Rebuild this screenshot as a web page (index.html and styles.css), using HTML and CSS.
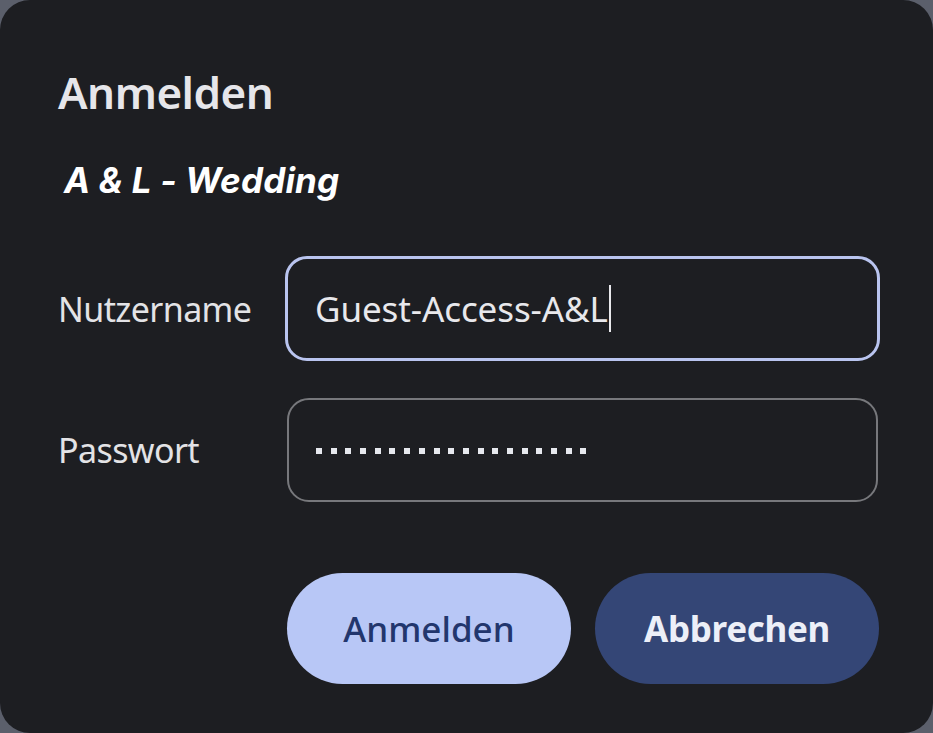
FILE: index.html
```html
<!DOCTYPE html>
<html lang="de">
<head>
<meta charset="utf-8">
<title>Anmelden</title>
<link rel="stylesheet" href="styles.css">
</head>
<body>
<div class="dialog">
  <h1 class="title">Anmelden</h1>
  <p class="subtitle">A &amp; L - Wedding</p>
  <div class="form">
    <label class="label">Nutzername</label>
    <div class="field field-focus">
      <span class="value">Guest-Access-A&amp;L</span><span class="caret"></span>
    </div>
    <label class="label">Passwort</label>
    <div class="field field-pw">
      <span class="dots" aria-label="Passwort">
        <i></i><i></i><i></i><i></i><i></i><i></i><i></i><i></i><i></i><i></i><i></i><i></i><i></i><i></i><i></i><i></i><i></i><i></i><i></i>
      </span>
    </div>
  </div>
  <div class="actions">
    <button class="btn btn-primary">Anmelden</button>
    <button class="btn btn-secondary">Abbrechen</button>
  </div>
</div>
</body>
</html>
```
FILE: styles.css
```css
html, body {
  margin: 0;
  padding: 0;
}
body {
  background: #5b5f6b;
  width: 933px;
  height: 733px;
  overflow: hidden;
  font-family: "Noto Sans", "Open Sans", sans-serif;
}
.dialog {
  box-sizing: border-box;
  width: 933px;
  height: 733px;
  background: #1d1e22;
  border-radius: 30px;
  padding: 66px 53px 0 58px;
  display: flex;
  flex-direction: column;
  color: #e3e3e6;
}
.title {
  margin: 0;
  font-size: 44px;
  line-height: 52px;
  font-weight: 600;
  letter-spacing: -0.5px;
  color: #e6e6ea;
}
.subtitle {
  margin: 42px 0 0 6px;
  font-family: Inter, "Noto Sans", sans-serif;
  font-style: italic;
  font-weight: 700;
  font-size: 35px;
  line-height: 40px;
  letter-spacing: 0.2px;
  color: #ffffff;
}
.form {
  margin-top: 56px;
  display: grid;
  grid-template-columns: 227px 1fr;
  row-gap: 36px;
  align-items: center;
}
.label {
  font-size: 34px;
  letter-spacing: -0.6px;
  color: #e3e3e6;
}
.field {
  box-sizing: border-box;
  height: 105px;
  border: 2px solid #77787c;
  border-radius: 22px;
  display: flex;
  align-items: center;
  padding-left: 28px;
}
.field-focus {
  border: 3px solid #b9c4ef;
  padding-left: 27px;
}
.field-pw {
  height: 104px;
  margin: 1px 2px 0;
  padding-left: 27px;
}
.value {
  font-size: 35px;
  color: #e8e8ec;
  letter-spacing: -0.1px;
}
.caret {
  width: 2px;
  height: 47px;
  background: #e8e8ec;
  margin-left: 1px;
}
.dots {
  display: flex;
  gap: 8.7px;
  margin-top: 2px;
}
.dots i {
  display: block;
  width: 6px;
  height: 6px;
  background: #e6e8ee;
}
.actions {
  margin-top: 71px;
  display: flex;
  justify-content: flex-end;
  gap: 24px;
  padding-right: 1px;
}
.btn {
  width: 284px;
  height: 111px;
  border: none;
  border-radius: 56px;
  font-family: "Noto Sans", "Open Sans", sans-serif;
  font-size: 35px;
  padding: 0;
}
.btn-primary {
  background: #b8c7f6;
  color: #22366d;
  font-weight: 500;
}
.btn-secondary {
  background: #344676;
  color: #eceff8;
  font-weight: 700;
  letter-spacing: -0.3px;
}
```
